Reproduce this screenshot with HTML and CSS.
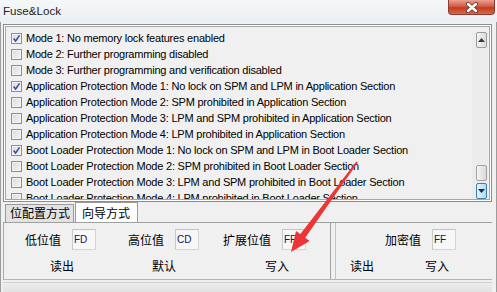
FILE: index.html
```html
<!DOCTYPE html>
<html lang="zh-CN">
<head>
  <meta charset="UTF-8" />
  <title>Fuse&amp;Lock</title>
  <link rel="stylesheet" href="styles.css">
</head>
<body>
  <div class="titlebar">
    <span class="title">Fuse&amp;Lock</span>
    <span class="close">
      <svg width="16" height="11" viewBox="0 0 16 11">
        <path d="M4 2 L12 9 M12 2 L4 9" stroke="#6b4038" stroke-width="4.2" stroke-linecap="round"/>
        <path d="M4 2 L12 9 M12 2 L4 9" stroke="#fff" stroke-width="2.4" stroke-linecap="round"/>
      </svg>
    </span>
  </div>

  <div class="window">
    <div class="list">
      <ul class="items">
        <li class="item"><span class="check on"><svg viewBox="0 0 9 9"><path d="M1.6 4.6 L3.6 7 L7.6 1.4"/></svg></span>Mode 1: No memory lock features enabled</li>
        <li class="item"><span class="check"></span>Mode 2: Further programming disabled</li>
        <li class="item"><span class="check"></span>Mode 3: Further programming and verification disabled</li>
        <li class="item"><span class="check on"><svg viewBox="0 0 9 9"><path d="M1.6 4.6 L3.6 7 L7.6 1.4"/></svg></span>Application Protection Mode 1: No lock on SPM and LPM in Application Section</li>
        <li class="item"><span class="check"></span>Application Protection Mode 2: SPM prohibited in Application Section</li>
        <li class="item"><span class="check"></span>Application Protection Mode 3: LPM and SPM prohibited in Application Section</li>
        <li class="item"><span class="check"></span>Application Protection Mode 4: LPM prohibited in Application Section</li>
        <li class="item"><span class="check on"><svg viewBox="0 0 9 9"><path d="M1.6 4.6 L3.6 7 L7.6 1.4"/></svg></span>Boot Loader Protection Mode 1: No lock on SPM and LPM in Boot Loader Section</li>
        <li class="item"><span class="check"></span>Boot Loader Protection Mode 2: SPM prohibited in Boot Loader Section</li>
        <li class="item"><span class="check"></span>Boot Loader Protection Mode 3: LPM and SPM prohibited in Boot Loader Section</li>
        <li class="item"><span class="check"></span>Boot Loader Protection Mode 4: LPM prohibited in Boot Loader Section</li>
      </ul>
      <div class="scrollbar">
        <div class="sb-btn">
          <svg width="7" height="4" viewBox="0 0 7 4"><path d="M0 4 L3.5 0 L7 4 Z" fill="#3a3a3a"/></svg>
        </div>
        <div class="sb-track"><div class="sb-thumb"></div></div>
        <div class="sb-btn down">
          <svg width="7" height="4" viewBox="0 0 7 4"><path d="M0 0 L7 0 L3.5 4 Z" fill="#1c2c4c"/></svg>
        </div>
      </div>
    </div>

    <div class="tabs">
      <div class="tab">位配置方式</div>
      <div class="tab active">向导方式</div>
    </div>

    <div class="panel">
      <div class="group fuse">
        <div class="fields">
          <div class="field"><span class="label">低位值</span><span class="val">FD</span></div>
          <div class="field"><span class="label">高位值</span><span class="val">CD</span></div>
          <div class="field"><span class="label">扩展位值</span><span class="val">FF</span></div>
        </div>
        <div class="actions">
          <span class="btn">读出</span>
          <span class="btn">默认</span>
          <span class="btn">写入</span>
        </div>
      </div>
      <div class="group lock">
        <div class="fields">
          <div class="field"><span class="label">加密值</span><span class="val">FF</span></div>
        </div>
        <div class="actions">
          <span class="btn">读出</span>
          <span class="btn">写入</span>
        </div>
      </div>
    </div>
    <div class="footer"></div>
  </div>

  <!-- red annotation arrow drawn over the screenshot -->
  <svg class="annot" width="497" height="292" viewBox="0 0 497 292">
    <polygon points="356.4,161.5 357.8,162.6 305.2,237.7 309.6,240.9 291,252 296,230.9 300.4,234.1" fill="#ee3434"/>
  </svg>
</body>
</html>
```

FILE: styles.css
```css
* {
  box-sizing: border-box;
}
body {
  margin: 0;
  width: 497px;
  height: 292px;
  overflow: hidden;
  position: relative;
  background: #f0f0f0;
  font-family: "Liberation Sans", "Noto Sans CJK SC", sans-serif;
  color: #000;
}

/* title bar */
.titlebar {
  height: 22px;
  display: flex;
  justify-content: space-between;
  align-items: flex-start;
  background: linear-gradient(#f5f7f9, #eceff2);
}
.title {
  padding: 4px 0 0 3px;
  font-size: 11.6px;
  line-height: 14px;
  color: #1e1e1e;
}
.close {
  width: 47px;
  height: 15px;
  margin-right: 2px;
  border: 1px solid #8e3a2e;
  border-top: none;
  border-radius: 0 0 4px 4px;
  background: linear-gradient(#e9a191, #d45c42 45%, #c23b22 55%, #d56b4c);
  display: flex;
  justify-content: center;
  align-items: center;
}

/* window body */
.window {
  height: 270px;
  border-left: 1px solid #9c9c9c;
  border-right: 1px solid #9c9c9c;
  padding: 2px 4px 0 2px;
}

.list {
  height: 178px;
  border: 1px solid #8c8c8c;
  box-shadow: inset 0 0 0 1px #fff, inset 0 0 0 2px #a6a6a6;
  padding: 2px;
  display: flex;
  overflow: hidden;
}
.items {
  flex: 1;
  min-width: 0;
  list-style: none;
  margin: 0;
  padding: 3px 0 0 5px;
  overflow: hidden;
}
.item {
  display: flex;
  align-items: center;
  gap: 4px;
  height: 16px;
  font-size: 11px;
  letter-spacing: -0.22px;
  white-space: nowrap;
}
.check {
  flex: none;
  width: 11px;
  height: 11px;
  border: 1px solid #8f8f8f;
  background: linear-gradient(135deg, #d9d9d9, #f7f7f7);
  box-shadow: inset 0 0 0 1px #f2f2f2;
  display: flex;
}
.check svg {
  width: 9px;
  height: 9px;
}
.check path {
  fill: none;
  stroke: #2d4a9e;
  stroke-width: 1.5;
}

.scrollbar {
  width: 16px;
  margin: 5px 1px 0 0;
  display: flex;
  flex-direction: column;
  background: #ececec;
}
.sb-btn {
  width: 11px;
  height: 16px;
  margin-left: 4px;
  border: 1px solid #9b9b9b;
  border-radius: 2px;
  background: linear-gradient(90deg, #f4f4f4, #dcdcdc);
  display: flex;
  justify-content: center;
  align-items: center;
}
.sb-btn.down {
  border-color: #3c7fb1;
  background: linear-gradient(90deg, #e6f3fc, #b5d9f2);
}
.sb-track {
  flex: 1;
  display: flex;
  flex-direction: column;
  justify-content: flex-end;
  padding-bottom: 2px;
}
.sb-thumb {
  width: 11px;
  height: 16px;
  margin-left: 4px;
  border: 1px solid #a3a3a3;
  border-radius: 2px;
  background: linear-gradient(90deg, #f5f5f5, #d9d9d9);
}

/* tabs */
.tabs {
  height: 20px;
  display: flex;
  align-items: flex-end;
  padding-left: 2px;
  font-family: "Noto Sans CJK SC", sans-serif;
  font-size: 12px;
}
.tab {
  height: 18px;
  width: 69px;
  padding-left: 4px;
  line-height: 16px;
  border: 1px solid #9a9a9a;
  border-bottom: none;
  background: #e2e2e2;
}
.tab.active {
  height: 20px;
  width: 63px;
  margin-left: 1px;
  padding-left: 6px;
  line-height: 20px;
  background: #fff;
}

/* panel */
.panel {
  height: 58px;
  display: flex;
  border-top: 1px solid #a0a0a0;
  border-left: 1px solid #a8a8a8;
  border-bottom: 1px solid #b4b4b4;
  font-family: "Noto Sans CJK SC", sans-serif;
  font-size: 12px;
}
.group.fuse {
  width: 327px;
  border-right: 1px solid #9f9f9f;
}
.group.lock {
  flex: 1;
  min-width: 0;
  margin-left: 4px;
  border-left: 1px solid #c4c4c4;
}
.fields {
  margin-top: 6px;
  height: 21px;
  display: grid;
  grid-template-columns: 103px 95px auto;
  padding-left: 21px;
}
.lock .fields {
  padding-left: 49px;
}
.field {
  display: flex;
  align-items: center;
  gap: 11px;
}
.label {
  line-height: 16px;
}
.val {
  width: 24px;
  height: 21px;
  padding-left: 1px;
  border: 1px solid #d4d4d4;
  border-top-color: #c2c2c2;
  border-left-color: #c8c8c8;
  background: #f7f7f7;
  font-family: "Liberation Sans", sans-serif;
  font-size: 10px;
  line-height: 19px;
  color: #12125e;
}
.actions {
  margin-top: 8px;
  display: grid;
  grid-template-columns: 102px 113px 80px;
  padding-left: 18px;
}
.btn {
  width: 80px;
  text-align: center;
  line-height: 16px;
}
.lock .actions {
  display: flex;
  gap: 25px;
  padding-left: 1px;
}
.lock .btn {
  width: 50px;
}

.footer {
  height: 10px;
  margin-top: 2px;
  border-top: 1px solid #cfcfcf;
  background: linear-gradient(#ececec, #e2e2e2);
}

.annot {
  position: absolute;
  left: 0;
  top: 0;
  pointer-events: none;
}
```
